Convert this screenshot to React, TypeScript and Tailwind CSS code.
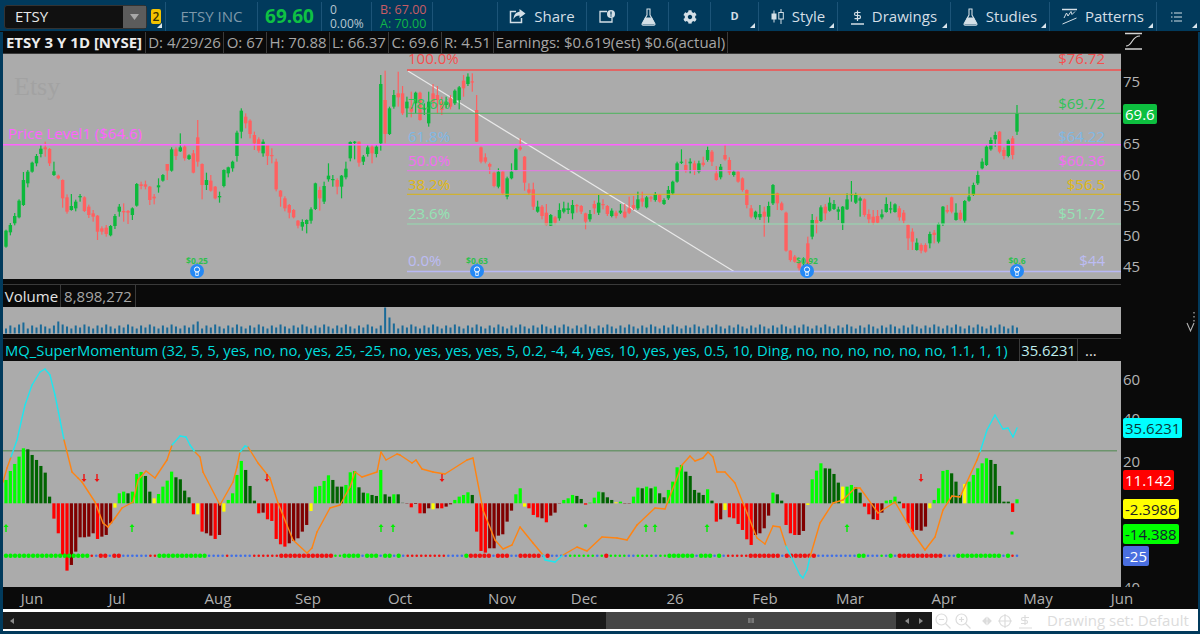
import React from 'react'
import { FaCog } from 'react-icons/fa'

// candle: body top, body bottom, up(1)/down(0), optional wick top / bottom. y is (page y - 60) * 3
const candles: number[][] = [
  [512,560,1],[495,517,1],[468,490,1],[422,472,1,418,475],[360,435,1,336,438],[335,370,1,330,382],[308,335,1],[288,310,1],[266,282,1,255,292],[262,268,0,245,290],
  [267,310,0,264,318],[334,345,1,305,348],[347,355,0],[360,415,0,358,443],[412,455,0],[438,450,1,402,452],[425,445,1],[408,412,1,402,425],[412,453,0],[440,465,0],
  [460,470,0,450,485],[467,515,0,465,540],[505,515,0],[503,522,0,495,530],[498,526,1],[468,498,1],[440,455,1,432,470],[453,457,0,430,485],[453,458,0,450,492],[445,465,1,442,480],
  [372,437,1],[373,378,0,365,388],[373,380,0,362,388],[380,420,0,378,435],[410,415,0,402,433],[376,382,1,355,398],[345,362,1],[312,332,0,312,360],[268,332,1,262,335],[268,288,0,262,300],
  [262,274,1,220,276],[260,295,0,255,302],[286,297,1],[280,338,0,270,340],[232,305,0,180,320],[312,375,0,310,418],[360,375,1,338,390],[362,392,0,345,395],[380,415,0,378,418],[408,412,1,395,428],
  [330,378,1,328,382],[322,340,1,320,352],[305,325,1,302,335],[218,288,1,212,305],[152,215,1,145,235],[170,190,0,160,205],[182,222,0,178,235],[225,250,0,215,270],[238,272,0,232,278],[245,280,1,238,290],
  [255,288,0,252,315],[285,288,0,265,310],[305,388,0],[392,410,0,390,440],[415,445,0],[435,458,0,432,475],[450,472,0],[482,497,0,480,505],[486,500,1,478,512],[480,492,1,478,520],
  [448,482,1],[370,447,1,368,450],[390,415,0,380,452],[378,425,1,365,432],[347,358,1,310,365],[357,360,1,345,380],[360,380,0,355,403],[347,380,1,345,415],[326,352,1,305,358],[246,295,1,244,304],
  [245,248,1,243,298],[245,308,0,244,320],[290,305,1,285,315],[262,282,1,255,290],[260,280,0,252,310],[260,282,1,255,292],[72,250,1,45,272],[120,222,0,32,250],[145,222,1,140,225],[105,140,1,90,146],
  [100,112,0,35,140],
  [100,160,0,78,165],[125,145,1,110,172],[140,155,0,95,172],[98,130,1,95,160],[98,180,0,95,182],[145,148,1,130,165],[125,190,1,95,200],[100,125,0,72,140],[105,120,0,78,160],[125,150,0,110,165],
  [125,135,1,110,145],[115,140,0,105,148],[92,130,1,88,135],[82,120,1,78,148],[62,85,0,45,110],[50,72,1,40,78],[64,67,0,40,95],[150,245,0,105,246],[262,305,0,260,310],[292,305,0,280,310],
  [312,320,0,308,342],[338,378,0,335,382],[335,380,1,325,385],[335,400,0,333,405],[355,410,1,350,418],[335,355,1,310,358],[268,330,1,264,333],[262,268,0,235,272],[290,368,0,288,392],[388,398,0,370,405],
  [388,440,0,368,450],[440,455,1,422,458],[440,468,0,435,478],[458,495,0,432,497],[465,497,1,462,498],[472,488,0,468,494],[450,475,1,430,482],[445,455,1,425,460],[445,450,1,428,462],[435,460,1,420,478],
  [435,438,0,432,458],[438,455,0,435,462],[460,485,0,458,508],[462,478,1,450,485],[432,445,0,422,462],[428,458,1,405,465],[432,435,0,418,448],[438,462,0,435,468],[452,468,1,445,472],[458,468,0,452,475],
  [452,458,1,432,462],[455,472,0,432,475],[445,458,0,410,462],[435,445,0,408,450],[418,445,1,395,450],[415,425,0,395,440],[412,442,1,408,445],[412,415,0,408,425],[402,420,1,396,425],[405,425,0,402,428],
  [420,432,1,415,435],[390,415,1,378,420],[365,400,1,362,405],[310,365,1,305,368],[305,308,1,268,312],[315,332,0,298,338],[305,310,1,295,340],[310,330,0,302,345],[310,335,1,302,340],[308,315,0,290,320],
  [270,300,1,260,305],[275,305,0,270,318],[340,360,0,318,362],[320,352,1,312,358],[285,298,0,255,302],[300,338,0,292,345],[335,345,1,330,350],[335,365,0,332,368],[355,390,0,352,395],[390,435,0,388,445],
  [445,470,0,435,475],[455,472,1,452,478],[462,472,1,435,480],[455,470,0,440,530],[438,470,1,425,488],[375,430,1,372,435],[400,430,0,398,450],[430,450,0,425,452],[458,572,0,455,575],[572,600,0,570,605],
  [590,605,0,585,608],[605,625,0,600,632],
  [620,632,1,592,640],[550,625,0,530,650],[480,530,1,462,538],[480,492,0,470,520],[442,483,1,436,486],[440,460,0,432,480],[428,452,1,412,455],[432,447,1,420,450],[448,455,1,440,480],[440,490,1,438,510],
  [418,448,1,400,450],[402,405,1,363,425],[405,428,1,398,432],[415,422,1,410,470],[418,465,0,415,470],[462,478,0,448,490],[470,488,0,450,495],[468,488,0,450,490],[463,472,1,448,478],[432,456,1,412,458],
  [445,448,1,425,460],[433,456,1,430,458],[445,472,0,438,482],[458,482,0,450,490],[495,535,0,492,570],[515,545,0,505,570],[548,570,1,535,572],[555,572,0,550,580],[555,575,0,550,578],[522,550,1,515,565],
  [518,525,0,510,550],[492,545,1,488,550],[440,492,1,438,498],[450,455,0,435,460],[412,455,0,410,460],[458,480,1,430,482],[458,478,0,450,482],[423,482,1,420,488],[410,422,1,380,425],[375,405,1,368,408],
  [345,370,1,330,375],[305,325,1,295,328],[260,315,1,255,318],[240,268,1,232,272],[225,238,1,215,260],[215,275,0,213,280],[270,288,0,262,298],[242,288,1,238,292],[235,285,0,228,298],[160,215,1,135,225],
]

// histogram bars, letter is the colour, number is the height * 3
const bars = ('G70 G97 G118 G140 G165 D162 D145 D130 D112 D92 D20 R-46 R-90 R-155 R-202 K-185 K-145 K-102 K-102 K-100 K-90 R-107 K-100 K-95 K-60 Y-13 G30 G35 D30 G35 ' +
  'G88 G94 D82 D35 Y15 G28 G50 G68 G95 D78 D72 D38 D18 R-33 Y-33 R-85 K-90 K-97 R-107 K-95 Y-25 G10 G30 G85 G127 D100 D52 D8 R-30 K-28 R-48 R-53 R-107 R-123 R-130 ' +
  'K-120 K-113 K-105 K-85 K-65 Y-23 G50 G52 G67 G84 D70 D50 D50 G55 G93 G97 D48 D32 G30 D25 D22 G100 D27 D20 G27 D27 ' +
  'A3 K-1 R-12 K-2 R-30 K-30 K-15 Y-18 K-15 R-15 K-10 K-3 G10 G20 G25 G33 D25 R-85 R-143 R-148 K-135 K-135 K-97 K-93 K-55 K-22 G27 G45 Y-10 R-15 R-35 R-42 K-45 R-57 K-37 K-28 K-1 ' +
  'G10 G15 G25 D22 D13 R-4 G2 G17 G35 D33 D18 D10 Y3 G5 K-1 K-1 G20 G47 D45 G50 D45 G50 D30 D18 G40 G65 G108 G115 D95 D82 D40 D32 D25 G42 D8 ' +
  'R-55 K-48 Y-20 R-42 R-45 R-62 R-80 R-108 R-125 K-95 K-90 K-75 K-37 G32 D27 D8 R-65 R-90 R-95 K-95 K-83 Y-5 ' +
  'G72 G98 G120 D105 D104 D88 D62 Y50 G50 G55 D48 D32 R-10 R-33 K-48 R-50 K-28 G8 G10 G20 D5 R-15 R-60 R-85 K-80 K-82 K-70 Y-15 G10 G45 G97 G100 D90 D65 D25 Y58 G65 G85 G105 G120 G135 D130 D118 D52 D5 D5 R-26 G12').split(' ')

const barColors: Record<string, string> = { G: '#00ff00', D: '#006400', R: '#ff0000', K: '#800000', Y: '#ffff00', A: '#809080' }

// the dotted row under the histogram, run length coded
const dotRuns = 'G19 r1 b1 R2 b1 R2 b6 r2 G11 b4 r1 b5 r6 R12 g2 G4 b1 G3 b1 G2 b1 G1 b1 r9 b4 G1 R5 b1 R3 b2 R5 b1 R1 b4 g6 b1 g1 R1 g4 b2 g4 b1 g2 G6 b1 G3 b1 G1 b1 r5 R7 b1 R7 b9 G2 b3 g1 b1 G1 b1 R10 b3 G10 b1 G1 r1 b1'

const dots: string[] = []
dotRuns.split(' ').forEach((run) => {
  const n = parseInt(run.slice(1))
  for (let i = 0; i < n; i++) dots.push(run[0])
})

// momentum line in page coordinates
const line = [
  [3,482],[7,468],[11,457],[17,440],[25,405],[32,385],[40,372],[45,369],[50,375],[55,395],[60,420],[64,440],[72,472],[78,478],[82,482],[95,502],[103,523],[108,527],[115,518],[122,508],[133,502],[138,480],[146,471],[155,478],[167,460],[172,445],[180,436],[186,437],[190,445],[195,452],[200,457],[203,472],[220,505],[233,482],[237,467],[240,452],[245,446],[248,447],[258,463],[270,478],[278,503],[293,540],[307,553],[312,548],[317,532],[330,508],[340,505],[350,487],[355,472],[362,477],[377,472],[381,452],[386,460],[397,454],[400,455],[412,463],[416,460],[422,469],[433,472],[445,474],[467,460],[473,458],[483,510],[495,540],[503,549],[512,545],[520,527],[533,543],[543,555],[545,560],[555,562],[563,555],[577,547],[587,551],[602,537],[617,538],[627,540],[637,525],[655,508],[665,509],[682,465],[690,456],[695,461],[703,458],[708,452],[713,457],[717,472],[725,472],[735,483],[747,513],[757,538],[765,544],[773,526],[780,527],[786,546],[800,575],[803,578],[807,570],[810,557],[820,523],[833,503],[843,500],[855,488],[860,488],[878,513],[895,502],[913,533],[925,550],[935,537],[943,510],[952,496],[960,497],[977,460],[980,452],[987,430],[995,415],[1003,429],[1008,428],[1013,437],[1017,428],
]

const fibs = [
  { y: 70, color: '#f4504f', text: '#f4504f', h: 1.5, pct: '100.0%', price: '$76.72', ty: 64 },
  { y: 113.3, color: '#4cb45c', text: '#30c458', h: 1, pct: '78.6%', price: '$69.72', ty: 109 },
  { y: 170.7, color: '#e874e8', text: '#f46cf4', h: 1, pct: '50.0%', price: '$60.36', ty: 166 },
  { y: 194.3, color: '#d8b414', text: '#e0b814', h: 1, pct: '38.2%', price: '$56.5', ty: 190 },
  { y: 224, color: '#94dcb0', text: '#94e4b4', h: 1, pct: '23.6%', price: '$51.72', ty: 219 },
  { y: 271.5, color: '#b8b8f4', text: '#bcbcf4', h: 1.5, pct: '0.0%', price: '$44', ty: 266 },
]

const earnings = [
  { x: 197, label: '$0.25' },
  { x: 477, label: '$0.63' },
  { x: 807, label: '$0.92' },
  { x: 1017, label: '$0.6' },
]

const timeLabels: [string, number][] = [
  ['Jun', 32], ['Jul', 117], ['Aug', 218], ['Sep', 308], ['Oct', 400], ['Nov', 502], ['Dec', 584],
  ['26', 675], ['Feb', 765], ['Mar', 850], ['Apr', 944], ['May', 1038], ['Jun', 1122],
]

const step = (1017 - 6) / (candles.length - 1)

function Corner() {
  return (
    <svg className="absolute right-[3px] bottom-[3px]" width="5" height="5" viewBox="0 0 5 5">
      <path d="M5 0V5H0Z" fill="#d8e4ec" />
    </svg>
  )
}

function ToolBtn({ w, label, menu, children }: { w: string; label?: string; menu?: boolean; children: React.ReactNode }) {
  return (
    <div className={`${w} relative h-full flex items-center justify-center gap-[8px] border-r border-[#1c5478] text-[15px] text-[#d4dfe6]`}>
      {children}
      {label && <span>{label}</span>}
      {menu && <Corner />}
    </div>
  )
}

function PriceChart() {
  return (
    <svg className="block w-[1118px] h-[225px] bg-[#ababab]" viewBox="3 54 1118 225">
      <text x="14" y="95" fontFamily="'Liberation Serif', serif" fontSize="26" fill="#a2a2a2">Etsy</text>
      <line x1="408" y1="71" x2="734" y2="271.5" stroke="#e8e8e8" strokeWidth="1.2" />
      {candles.map((c, i) => {
        const x = 6 + i * step
        const top = 60 + c[0] / 3
        const bot = 60 + c[1] / 3
        const wt = c[3] !== undefined ? 60 + c[3] / 3 : top - 1 - (i * 37) % 3
        const wb = c[4] !== undefined ? 60 + c[4] / 3 : bot + 1 + (i * 53) % 3
        const color = c[2] ? '#0cb93c' : '#ff6060'
        return (
          <g key={i}>
            <rect x={x - 0.6} y={wt} width="1.2" height={wb - wt} fill={color} />
            <rect x={x - 1.7} y={top} width="3.4" height={Math.max(bot - top, 1.2)} fill={color} />
          </g>
        )
      })}
      {fibs.map((f) => (
        <g key={f.pct}>
          <rect x="407" y={f.y - f.h / 2} width="714" height={f.h} fill={f.color} />
          <text x="408" y={f.ty} fontSize="15" fill={f.text}>{f.pct}</text>
          <text x="1105" y={f.ty} fontSize="15" fill={f.text} textAnchor="end">{f.price}</text>
        </g>
      ))}
      <rect x="3" y="144" width="1118" height="1.5" fill="#ff62ff" />
      <text x="8" y="139" fontSize="15" fill="#ff62ff">Price Level1 ($64.6)</text>
      <text x="408" y="142" fontSize="15" fill="#80b8e4">61.8%</text>
      <text x="1105" y="142" fontSize="15" fill="#80b8e4" textAnchor="end">$64.22</text>
      {earnings.map((e) => (
        <g key={e.x}>
          <text x={e.x} y="264" fontSize="8.500" fontWeight="700" fill="#2fc04f" textAnchor="middle">{e.label}</text>
          <circle cx={e.x} cy="271" r="7" fill="#2488f4" />
          <circle cx={e.x} cy="269.500" r="2.600" fill="none" stroke="#fff" strokeWidth="1" />
          <rect x={e.x - 1.2} y="272" width="2.400" height="3.500" fill="none" stroke="#fff" strokeWidth="0.800" />
        </g>
      ))}
    </svg>
  )
}

function VolumeChart() {
  return (
    <svg className="block w-[1118px] h-[27px] bg-[#ababab]" viewBox="3 307 1118 27">
      {candles.map((_, i) => {
        const x = 6 + i * step
        let h = 5 + (i * 13) % 5
        if (i === 87) h = 26
        if (i === 88) h = 16
        if (i === 89) h = 10
        if (i === 12 || i === 44) h = 12
        if (i === 4) h = 11
        return <rect key={i} x={x - 1} y={333.5 - h} width="2" height={h} fill="#1a6a98" />
      })}
    </svg>
  )
}

function Indicator() {
  return (
    <svg className="block w-[1118px] h-[226px] bg-[#ababab]" viewBox="3 361 1118 226">
      <rect x="3" y="450" width="1114" height="1.500" fill="#6c946c" />
      {bars.map((b, i) => {
        const v = parseInt(b.slice(1)) / 3
        const x = 6 + i * ((1017 - 6) / (bars.length - 1))
        return (
          <rect
            key={i}
            x={x - 1.6}
            y={v > 0 ? 503.3 - v : 503.3}
            width="3.200"
            height={Math.abs(v)}
            fill={barColors[b[0]]}
          />
        )
      })}
      {dots.map((d, i) => {
        const x = 6 + i * ((1017 - 6) / (dots.length - 1))
        const big = d === 'G' || d === 'R'
        const color = d === 'G' || d === 'g' ? '#00f000' : d === 'R' || d === 'r' ? '#f01010' : '#3f6fe8'
        return <circle key={i} cx={x} cy="555.700" r={big ? 2.2 : 1.3} fill={color} />
      })}
      {line.slice(1).map((p, i) => {
        const a = line[i]
        const mid = (a[1] + p[1]) / 2
        return (
          <line
            key={i}
            x1={a[0]}
            y1={a[1]}
            x2={p[0]}
            y2={p[1]}
            stroke={mid < 451 || mid > 556 ? '#1fe6ee' : '#ff8412'}
            strokeWidth="1.400"
            strokeLinecap="round"
          />
        )
      })}
      {[6, 132, 381, 393, 646, 655, 707, 847].map((x) => (
        <path key={x} d={`M${x} 524l-2.5 3h1.8v5h1.4v-5h1.8z`} fill="#00f000" />
      ))}
      {[84, 97, 267, 442, 921].map((x) => (
        <path key={x} d={`M${x} 482l-2.5 -3h1.8v-5h1.4v5h1.8z`} fill="#f01010" />
      ))}
      <circle cx="585.500" cy="525.700" r="1.700" fill="#00f000" />
      <rect x="1010.500" y="531.500" width="3" height="3" fill="#00f000" />
    </svg>
  )
}

function AxisLabels() {
  const ticks: [string, number][] = [
    ['75', 87], ['65', 149], ['60', 180], ['55', 211], ['50', 241], ['45', 272],
    ['0', 345], ['60', 385], ['40', 424], ['20', 467], ['40', 593],
  ]
  return (
    <svg className="absolute inset-0 w-[77px] h-[555px]" viewBox="1121 32 77 555">
      <path d="M1125 33.500h17M1125 49h17" stroke="#d4d4d4" strokeWidth="1.600" />
      <path d="M1126 46c7 0 5-10 14-10" stroke="#d4d4d4" strokeWidth="1.200" fill="none" />
      {ticks.map(([t, y], i) => (
        <text key={i} x="1123" y={y} fontSize="15" fill="#b4b4b4">{t}</text>
      ))}
      <rect x="1121" y="335" width="30" height="16" fill="#0a0a0a" />
      <path d="M1187 323l3.500 8 3.500-8" stroke="#b4b4b4" strokeWidth="1.100" fill="none" />
      <path d="M1194 312v1.500M1194 316v1.500M1194 320v1.500" stroke="#b4b4b4" strokeWidth="1.200" />
    </svg>
  )
}

function Tag({ pos, bg, color, children }: { pos: string; bg: string; color: string; children: React.ReactNode }) {
  return (
    <div className={`absolute left-[2px] ${pos} ${bg} ${color} h-[20px] px-[2px] rounded-[2px] flex items-center text-[15px] leading-none`}>
      {children}
    </div>
  )
}

function TitleCell({ w, children, className }: { w: string; children: React.ReactNode; className?: string }) {
  return (
    <div className={`${w} h-full flex items-center justify-center border-r border-[#3a3a3a] whitespace-nowrap ${className ?? ''}`}>
      {children}
    </div>
  )
}

export default function App() {
  return (
    <div className="w-[1200px] h-[634px] overflow-hidden flex flex-col bg-[#013a5c] font-['Open_Sans',sans-serif]">
      {/* toolbar */}
      <div className="h-[32px] flex items-center pt-[2px] border-b border-[#0c0c0c]">
        <div className="w-[165px] h-full flex items-center pl-[4px] relative">
          <div className="w-[143px] h-[24px] flex items-center justify-between bg-[#111] border border-[#333] rounded-[3px]">
            <span className="pl-[10px] text-[15px] text-[#e8e8e8]">ETSY</span>
            <div className="w-[23px] h-full bg-[#5c5c5c] flex items-center justify-center">
              <svg width="9" height="6" viewBox="0 0 9 6"><path d="M0 0h9L4.500 6z" fill="#a8a8a8" /></svg>
            </div>
          </div>
          <div className="ml-[4px] w-[10px] h-[15px] bg-[#f3c200] rounded-[2px] flex items-center justify-center text-[12px] leading-none font-semibold text-[#3a3000]">2</div>
          <Corner />
        </div>
        <div className="w-[93px] h-full flex items-center justify-center border-x border-[#1c5478] text-[15px] text-[#7d98aa]">ETSY INC</div>
        <div className="w-[64px] h-full flex items-center justify-center border-r border-[#1c5478] text-[19px] font-bold text-[#0fc144]">69.60</div>
        <div className="w-[50px] h-full flex flex-col justify-center pl-[8px] border-r border-[#1c5478] text-[12px] leading-[14px] text-[#b8c6d0]">
          <span>0</span>
          <span>0.00%</span>
        </div>
        <div className="w-[61px] h-full flex flex-col justify-center pl-[8px] border-r border-[#1c5478] text-[12.5px] leading-[14px]">
          <span className="text-[#c85c64]">B: 67.00</span>
          <span className="text-[#10b648]">A: 70.00</span>
        </div>
        <div className="w-[65px] h-full border-r border-[#1c5478]" />
        <ToolBtn w="w-[89px]" label="Share">
          <svg width="17" height="15" viewBox="0 0 17 15" fill="none">
            <path d="M7 2.500H1.500v11h11V9" stroke="#d4dfe6" strokeWidth="1.500" />
            <path d="M10.500 0l6 4.500-6 4.500V6.500C7.500 6.500 5.500 8 4.500 10.500 4.500 6 7 3 10.500 2.800z" fill="#d4dfe6" />
          </svg>
        </ToolBtn>
        <ToolBtn w="w-[41px]">
          <svg width="16" height="13" viewBox="0 0 16 13" fill="none">
            <path d="M8 1.500H1v10.500h12V8" stroke="#d4dfe6" strokeWidth="1.300" />
            <circle cx="12" cy="4" r="4" fill="#d4dfe6" />
            <rect x="11.400" y="1.500" width="1.200" height="3.200" fill="#013a5c" />
            <rect x="11.400" y="5.400" width="1.200" height="1.200" fill="#013a5c" />
          </svg>
        </ToolBtn>
        <ToolBtn w="w-[41px]">
          <svg width="15" height="18" viewBox="0 0 15 18" fill="none">
            <path d="M5.500 1h4M6 1v6L1.200 15.500c-.5 1 0 1.700 1 1.700h10.600c1 0 1.500-.7 1-1.700L9 7V1" stroke="#d4dfe6" strokeWidth="1.100" />
            <path d="M4 9.500h7l3 7H1z" fill="#d4dfe6" />
          </svg>
        </ToolBtn>
        <ToolBtn w="w-[42px]">
          <FaCog className="text-[14px]" />
        </ToolBtn>
        <ToolBtn w="w-[48px]" menu>
          <span className="text-[11px] font-bold">D</span>
        </ToolBtn>
        <ToolBtn w="w-[79px]" label="Style" menu>
          <svg width="13" height="15" viewBox="0 0 13 15" fill="none">
            <path d="M3 1.500v12M10 0v15" stroke="#d4dfe6" strokeWidth="1" />
            <rect x="0.500" y="4.500" width="5" height="6" fill="#d4dfe6" />
            <rect x="7.800" y="3.500" width="4.500" height="6.500" fill="#013a5c" stroke="#d4dfe6" />
          </svg>
        </ToolBtn>
        <ToolBtn w="w-[113px]" label="Drawings" menu>
          <svg width="13" height="16" viewBox="0 0 13 16" fill="none">
            <path d="M0 15h13" stroke="#d4dfe6" strokeWidth="1.500" />
            <path d="M9.500 3.500H5c-2 0-2 3 0 3h3c2 0 2 3.200 0 3.200H3.500M6.500 1.500v10.500" stroke="#d4dfe6" strokeWidth="1.200" />
          </svg>
        </ToolBtn>
        <ToolBtn w="w-[99px]" label="Studies" menu>
          <svg width="15" height="18" viewBox="0 0 15 18" fill="none">
            <path d="M5.500 1h4M6 1v6L1.200 15.500c-.5 1 0 1.700 1 1.700h10.600c1 0 1.500-.7 1-1.700L9 7V1" stroke="#d4dfe6" strokeWidth="1.100" />
            <path d="M4 9.500h7l3 7H1z" fill="#d4dfe6" />
          </svg>
        </ToolBtn>
        <ToolBtn w="w-[107px]" label="Patterns" menu>
          <svg width="15" height="17" viewBox="0 0 15 17" fill="none">
            <path d="M0 1.500h15" stroke="#d4dfe6" strokeWidth="1.500" />
            <path d="M2 10l2.500-5 1.500 3 3-4.500 1 3 3-3M0.500 16L14.500 10" stroke="#d4dfe6" strokeWidth="1" />
          </svg>
        </ToolBtn>
        <div className="flex-1 h-full relative flex items-center pl-[14px]">
          <svg width="11" height="10" viewBox="0 0 11 10" fill="none">
            <path d="M0 1h1.500M3 1h8M0 5h1.500M3 5h8M0 9h1.500M3 9h8" stroke="#d4dfe6" strokeWidth="1.100" />
          </svg>
          <Corner />
        </div>
      </div>

      {/* panes and price axis */}
      <div className="flex ml-[3px] mr-[2px] bg-[#0a0a0a]">
        <div className="w-[1118px] flex flex-col bg-[#0a0a0a]">
          <div className="h-[22px] flex items-center text-[15px] text-[#a6a6a6] border-b border-[#3a3a3a]">
            <TitleCell w="w-[143px]" className="font-bold text-[#ececec]">ETSY 3 Y 1D [NYSE]</TitleCell>
            <TitleCell w="w-[78px]">D: 4/29/26</TitleCell>
            <TitleCell w="w-[43px]">O: 67</TitleCell>
            <TitleCell w="w-[63px]">H: 70.88</TitleCell>
            <TitleCell w="w-[59px]">L: 66.37</TitleCell>
            <TitleCell w="w-[53px]">C: 69.6</TitleCell>
            <TitleCell w="w-[52px]">R: 4.51</TitleCell>
            <TitleCell w="w-[234px]">Earnings: $0.619(est) $0.6(actual)</TitleCell>
          </div>
          <PriceChart />
          <div className="h-[6px] border-b border-[#3a3a3a]" />
          <div className="h-[22px] flex items-center text-[15px] text-[#a6a6a6]">
            <TitleCell w="w-[58px]" className="text-[#e4e4e4]">Volume</TitleCell>
            <TitleCell w="w-[75px]">8,898,272</TitleCell>
          </div>
          <VolumeChart />
          <div className="h-[4px]" />
          <div className="h-[23px] flex items-center text-[14.8px] text-[#00dede] border-t border-[#3a3a3a] whitespace-nowrap">
            <TitleCell w="w-[1017px]" className="justify-start pl-[2px]">MQ_SuperMomentum (32, 5, 5, yes, no, no, yes, 25, -25, no, yes, yes, yes, 5, 0.2, -4, 4, yes, 10, yes, yes, 0.5, 10, Ding, no, no, no, no, no, no, 1.1, 1, 1)</TitleCell>
            <TitleCell w="w-[58px]" className="text-[#bfeeee]">35.6231</TitleCell>
            <span className="pl-[7px] text-[#e4e4e4]">...</span>
          </div>
          <Indicator />
        </div>
        <div className="w-[77px] h-[555px] relative">
          <AxisLabels />
          <Tag pos="top-[72px]" bg="bg-[#0dbf3f]" color="text-white">69.6</Tag>
          <Tag pos="top-[386px]" bg="bg-[#00ffff]" color="text-[#0a3a3a]">35.6231</Tag>
          <Tag pos="top-[438px]" bg="bg-[#ff0000]" color="text-white">11.142</Tag>
          <Tag pos="top-[467px]" bg="bg-[#ffff00]" color="text-[#222]">-2.3986</Tag>
          <Tag pos="top-[492px]" bg="bg-[#00ff00]" color="text-[#123]">-14.388</Tag>
          <Tag pos="top-[514px]" bg="bg-[#4a6fe0]" color="text-white">-25</Tag>
        </div>
      </div>

      {/* time axis */}
      <div className="h-[22px] bg-[#0a0a0a] ml-[3px] mr-[2px]">
        <svg className="block w-[1195px] h-[22px]" viewBox="3 587 1195 22">
          {timeLabels.map(([t, x]) => (
            <text key={x} x={x} y="604" fontSize="15" fill="#b0b0b0" textAnchor="middle">{t}</text>
          ))}
        </svg>
      </div>

      {/* scroll bar and drawing set */}
      <div className="h-[22px] ml-[3px] mr-[2px] bg-white flex items-center pt-[3px] pb-[2px]">
        <div className="w-[603px] h-full bg-[#1a1a1a] flex items-center pl-[7px]">
          <svg width="4" height="6" viewBox="0 0 4 6"><path d="M4 0v6L0 3z" fill="#8a8a8a" /></svg>
        </div>
        <div className="w-[290px] h-full bg-[#454545] flex items-center justify-center">
          <div className="w-[6px] h-[5px] border-x-2 border-[#777] bg-[#666]" />
        </div>
        <div className="w-[36px] h-full bg-[#1a1a1a] flex items-center justify-around px-[4px]">
          <svg width="4" height="6" viewBox="0 0 4 6"><path d="M4 0v6L0 3z" fill="#8a8a8a" /></svg>
          <svg width="4" height="6" viewBox="0 0 4 6"><path d="M0 0v6l4-3z" fill="#8a8a8a" /></svg>
        </div>
        <div className="flex-1 h-full flex items-center gap-[5px] pl-[3px] text-[#dcdcdc]">
          <svg width="97" height="16" viewBox="0 0 97 16" fill="none" stroke="#dcdcdc" strokeWidth="1.200">
            <circle cx="6.500" cy="6.500" r="5.500" /><path d="M10.500 10.500l5 5M4 6.500h5" />
            <circle cx="26.500" cy="6.500" r="5.500" /><path d="M30.500 10.500l5 5M24 6.500h5M26.500 4v5" />
            <path d="M48 8h8M48 8l3-3v6zM56 8l-3-3v6z" fill="#dcdcdc" />
            <circle cx="70" cy="8" r="5.500" /><path d="M70 1v14M63 8h14" />
            <path d="M84 15h13M94 4.500h-6c-2 0-2 3 0 3h3c2 0 2 3 0 3h-5M90 2v10" />
          </svg>
          <span className="pl-[10px] text-[15px] whitespace-nowrap">Drawing set: Default</span>
        </div>
      </div>
    </div>
  )
}
